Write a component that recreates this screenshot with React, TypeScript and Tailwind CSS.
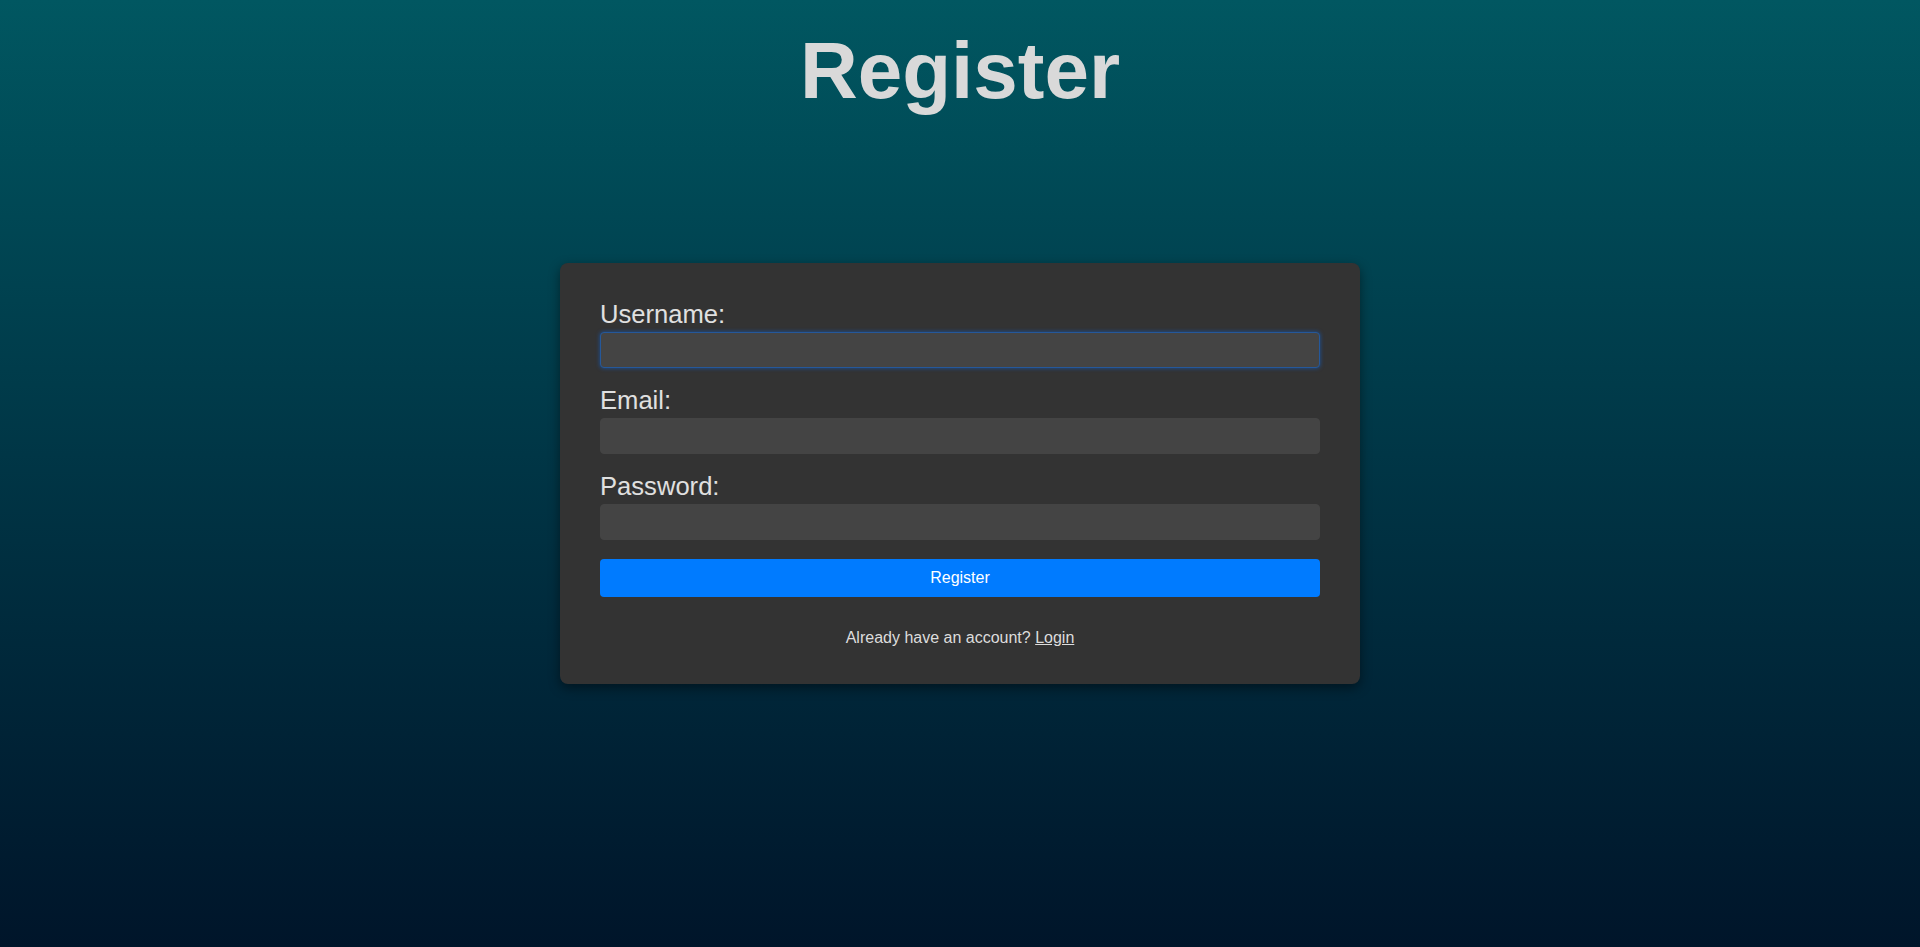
import React from 'react';

const fields = [
  { id: 'username', label: 'Username:', type: 'text', focused: true },
  { id: 'email', label: 'Email:', type: 'email', focused: false },
  { id: 'password', label: 'Password:', type: 'password', focused: false },
];

export default function App() {
  return (
    <div className="grid h-screen grid-rows-[1fr_auto_1fr] bg-linear-to-b from-[#015761] to-[#00152a] font-['Liberation_Sans',Arial,sans-serif] text-[#dddddd]">
      {/* Title */}
      <h1 className="mt-[31px] self-start text-center text-[80px] font-bold leading-none text-[#d9d9d9]">Register</h1>

      {/* Form card */}
      <div className="mx-auto w-[800px] rounded-lg bg-[#333333] px-10 pt-[37px] pb-[37px] shadow-[0_4px_12px_rgba(0,0,0,0.45)]">
        <form onSubmit={e => e.preventDefault()}>
          {fields.map((f, idx) => (
            <div key={f.id} className={idx < fields.length - 1 ? 'mb-[18px]' : 'mb-[19px]'}>
              <label htmlFor={f.id} className="mb-1 block text-[25.6px] leading-[28px] text-[#e0e0e0]">
                {f.label}
              </label>
              <input
                id={f.id}
                type={f.type}
                className={`block h-9 w-full rounded bg-[#444444] px-2 text-base text-white outline-none ${
                  f.focused
                    ? 'border border-[#25589a] shadow-[0_0_4px_rgba(0,110,255,0.55)]'
                    : 'border border-[#444444]'
                }`}
              />
            </div>
          ))}
          <button type="submit" className="block h-[38px] w-full rounded bg-[#007bff] text-base text-white">
            Register
          </button>
        </form>
        <p className="mt-8 text-center text-base leading-[18px] text-[#dddddd]">
          Already have an account? <a href="#" className="underline">Login</a>
        </p>
      </div>

      <div />
    </div>
  );
}
